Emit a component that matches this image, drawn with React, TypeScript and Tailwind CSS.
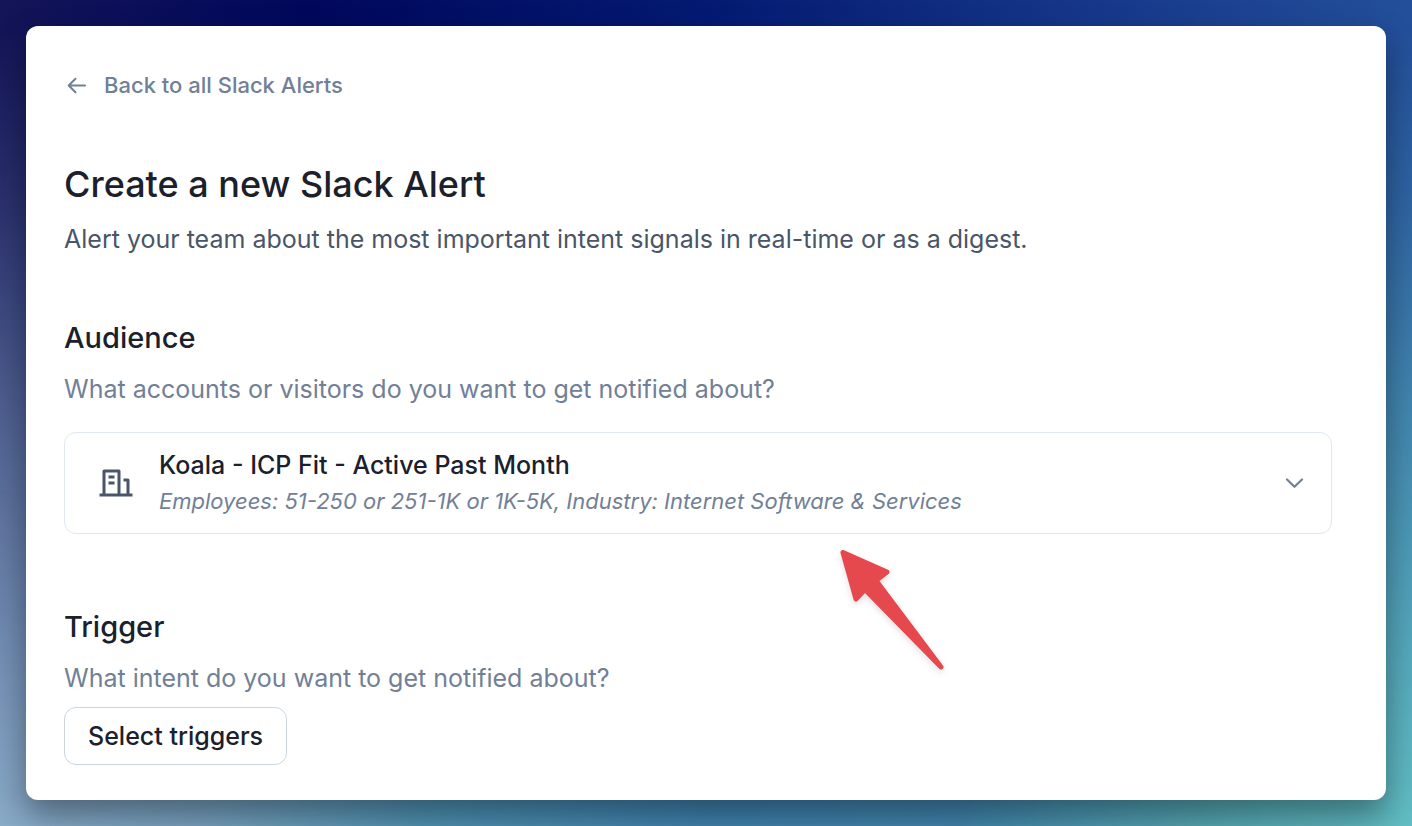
import { useState } from "react";

function BackArrowIcon() {
  return (
    <svg viewBox="0 0 24 24" className="size-6 shrink-0" fill="none" stroke="currentColor" strokeWidth="2" strokeLinecap="round" strokeLinejoin="round" aria-hidden="true">
      <path d="M21 12.500H5M11.500 5.700L4.700 12.500l6.800 6.800" />
    </svg>
  );
}

function BuildingIcon() {
  return (
    <svg viewBox="0 0 24 24" className="size-9 shrink-0 text-[#4a5568]" fill="currentColor" aria-hidden="true">
      <path d="M21 19h2v2H1v-2h2V4a1 1 0 0 1 1-1h10a1 1 0 0 1 1 1v15h4v-8h-2V9h3a1 1 0 0 1 1 1v9ZM5 5v14h8V5H5Zm2 6h4v2H7v-2Zm0-4h4v2H7V7Z" />
    </svg>
  );
}

function ChevronIcon() {
  return (
    <svg viewBox="0 0 24 24" className="size-6 shrink-0 text-[#718096]" fill="none" stroke="currentColor" strokeWidth="2.200" strokeLinecap="round" strokeLinejoin="round" aria-hidden="true">
      <path d="M4 8.500l7.500 7.300 7.500-7.300" />
    </svg>
  );
}

function PointerArrow() {
  return (
    <svg viewBox="0 0 104 120" className="pointer-events-none absolute top-[117px] left-[776px] w-[104px] drop-shadow-md" overflow="visible" aria-hidden="true">
      <path d="M3 3.500 47 23 36 31.500 101 118 25 40.500 16 50Z" fill="#e5484d" stroke="#e5484d" strokeWidth="5" strokeLinejoin="round" />
    </svg>
  );
}

function Backdrop() {
  return (
    <div className="absolute inset-0 bg-[linear-gradient(to_right,#141457,#00085c_22%,#041a72_50%,#17388a_78%,#234f9a)]" aria-hidden="true">
      <div className="size-full bg-[linear-gradient(to_right,#8aabc9,#77a3c0_15%,#5094b4_30%,#3f84b0_50%,#4187ae_68%,#55a8b2_85%,#62bec4)] [mask-image:linear-gradient(to_bottom,transparent_3%,rgb(0_0_0/0.2)_25%,rgb(0_0_0/0.5)_50%,rgb(0_0_0/0.8)_78%,black)]" />
    </div>
  );
}

export default function App() {
  const [open, setOpen] = useState(false);

  return (
    <div className="relative min-h-screen font-['Inter',sans-serif] text-[#1a202c]">
      <Backdrop />
      <div className="relative p-[26px]">
        <main className="rounded-xl bg-white px-[38px] pt-[41px] pb-[35px] shadow-[0_16px_32px_rgb(0_0_0/0.38)]">
          <a href="#alerts" className="inline-flex items-center gap-4 text-[22px] leading-9 font-medium text-[#718096]">
            <BackArrowIcon />
            Back to all Slack Alerts
          </a>
          <h1 className="mt-[57px] text-[36px] leading-12 font-medium">Create a new Slack Alert</h1>
          <p className="mt-[13px] text-[25px] leading-9 text-[#4a5568]">
            Alert your team about the most important intent signals in real-time or as a digest.
          </p>
          <section className="mt-[61px]">
            <h2 className="text-[29px] leading-10 font-medium">Audience</h2>
            <p className="mt-[13px] text-[25px] leading-9 text-[#718096]">
              What accounts or visitors do you want to get notified about?
            </p>
            <div className="relative mt-[25px] mr-4">
              <button
                type="button"
                aria-expanded={open}
                onClick={() => setOpen(!open)}
                className="flex w-full items-center gap-[25px] rounded-xl border border-[#e2e8f0] py-[14px] pr-6 pl-[33px] text-left"
              >
                <BuildingIcon />
                <span className="flex flex-1 flex-col">
                  <span className="text-[25px] leading-9 font-medium">Koala - ICP Fit - Active Past Month</span>
                  <span className="text-[22px] leading-9 text-[#718096] italic">
                    Employees: 51-250 or 251-1K or 1K-5K, Industry: Internet Software &amp; Services
                  </span>
                </span>
                <ChevronIcon />
              </button>
              <PointerArrow />
            </div>
          </section>
          <section className="mt-[73px]">
            <h2 className="text-[29px] leading-10 font-medium">Trigger</h2>
            <p className="mt-[13px] text-[25px] leading-9 text-[#718096]">
              What intent do you want to get notified about?
            </p>
            <button type="button" className="mt-[11px] rounded-xl border border-[#cbd5e0] px-[23px] py-[10px] text-[25px] leading-9 font-medium">
              Select triggers
            </button>
          </section>
        </main>
      </div>
    </div>
  );
}
